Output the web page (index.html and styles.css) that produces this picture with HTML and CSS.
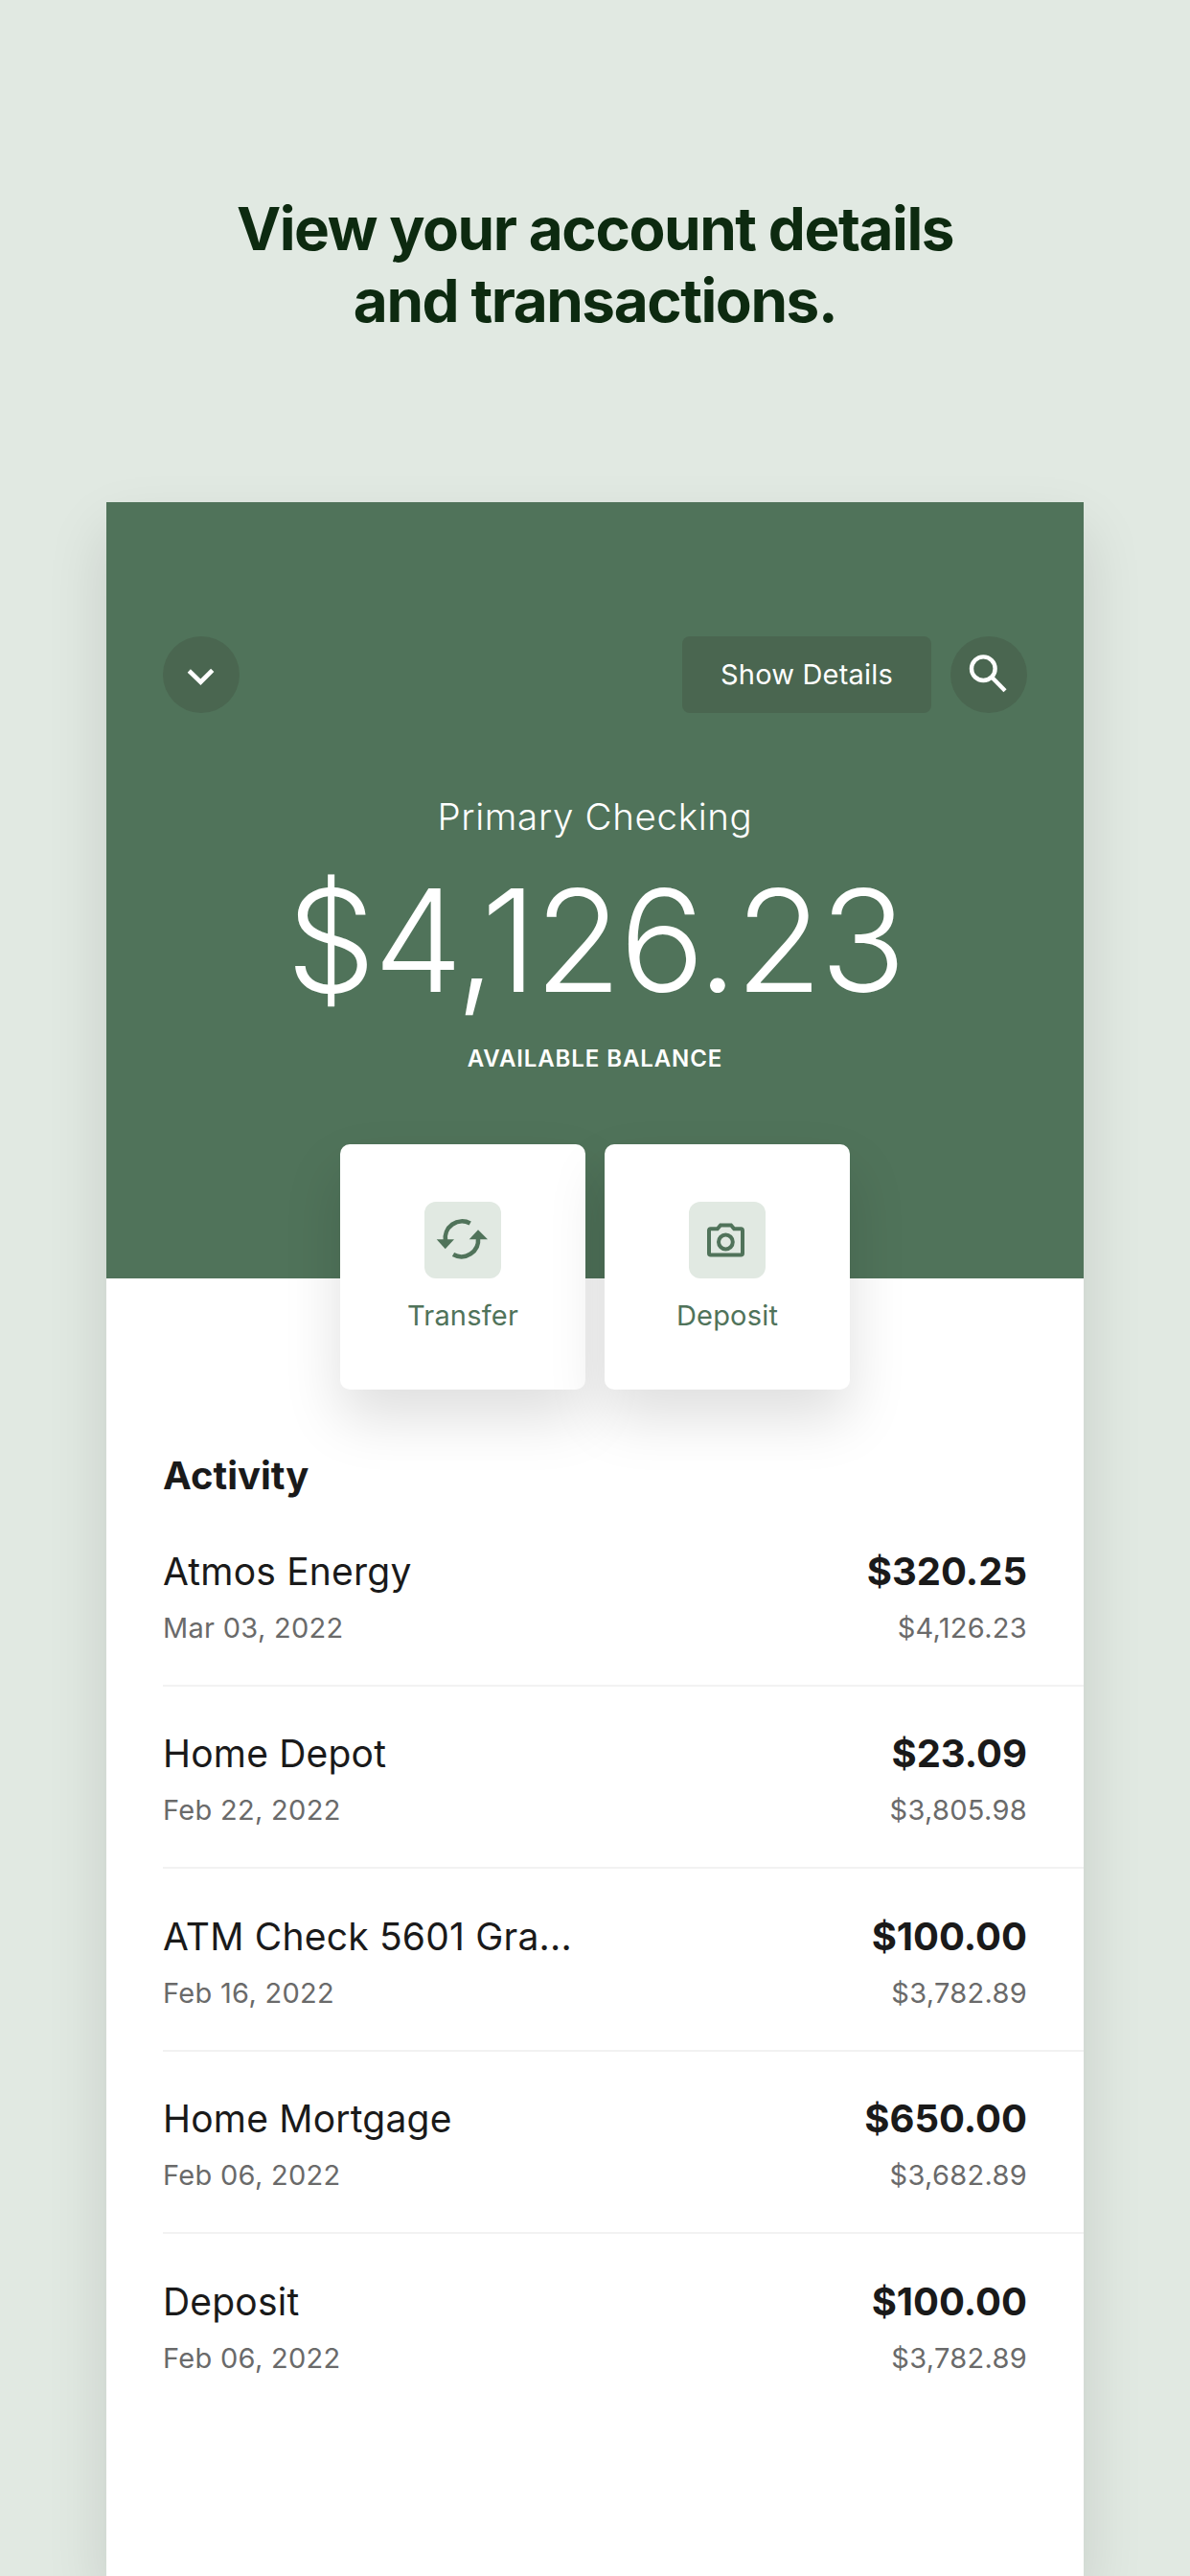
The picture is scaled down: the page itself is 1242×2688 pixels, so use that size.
FILE: index.html
```html
<!DOCTYPE html>
<html lang="en">
<head>
<meta charset="utf-8">
<title>Account details</title>
<link rel="stylesheet" href="styles.css">
</head>
<body>
<main class="page">
  <h1 class="headline">View your account details<br>and transactions.</h1>
  <section class="phone">
    <header class="hero">
      <div class="topbar">
        <button class="round-btn" aria-label="Accounts">
          <svg class="round-icon" viewBox="0 0 80 80"><path class="white-stroke chevron" d="M27.3 36 39.4 47.7 51.7 35.3"/></svg>
        </button>
        <div class="topbar-right">
          <button class="details-btn">Show Details</button>
          <button class="round-btn" aria-label="Search">
            <svg class="round-icon" viewBox="0 0 80 80"><circle class="white-stroke" cx="34.3" cy="33.7" r="12.3"/><path class="white-stroke" d="M43.5 43 57 56.7"/></svg>
          </button>
        </div>
      </div>
      <p class="account-name">Primary Checking</p>
      <p class="balance">$4,126.23</p>
      <p class="balance-label">AVAILABLE BALANCE</p>
      <div class="actions">
        <div class="action">
          <span class="tile">
            <svg class="tile-icon" viewBox="0 0 80 80">
              <path class="green-stroke" d="M47.7 22.6A17.5 17.5 0 0 0 22 41"/>
              <path class="green-fill" d="M12.7 39.3H31L21.7 49.3Z"/>
              <path class="green-stroke" d="M56 38A17.5 17.5 0 0 1 30 55"/>
              <path class="green-fill" d="M46.7 39.3H66L56 29.3Z"/>
            </svg>
          </span>
          <span class="action-label">Transfer</span>
        </div>
        <div class="action">
          <span class="tile">
            <svg class="tile-icon" viewBox="0 0 80 80">
              <path class="green-stroke thin" d="M21 30a1.8 1.8 0 0 1 1.8-1.8h7l3.2-3.7h11l3.2 3.7h7a1.8 1.8 0 0 1 1.8 1.8v23.8a1.8 1.8 0 0 1-1.8 1.8H22.8a1.8 1.8 0 0 1-1.8-1.8Z"/>
              <circle class="green-stroke thin" cx="38.4" cy="42" r="7.4"/>
            </svg>
          </span>
          <span class="action-label">Deposit</span>
        </div>
      </div>
    </header>
    <section class="activity">
      <h2 class="activity-title">Activity</h2>
      <ul class="rows">
        <li class="row"><span class="name">Atmos Energy</span><span class="amount">$320.25</span><span class="sub">Mar 03, 2022</span><span class="sub">$4,126.23</span></li>
        <li class="row"><span class="name">Home Depot</span><span class="amount">$23.09</span><span class="sub">Feb 22, 2022</span><span class="sub">$3,805.98</span></li>
        <li class="row"><span class="name">ATM Check 5601 Gra...</span><span class="amount">$100.00</span><span class="sub">Feb 16, 2022</span><span class="sub">$3,782.89</span></li>
        <li class="row"><span class="name">Home Mortgage</span><span class="amount">$650.00</span><span class="sub">Feb 06, 2022</span><span class="sub">$3,682.89</span></li>
        <li class="row"><span class="name">Deposit</span><span class="amount">$100.00</span><span class="sub">Feb 06, 2022</span><span class="sub">$3,782.89</span></li>
      </ul>
    </section>
  </section>
</main>
</body>
</html>
```
FILE: styles.css
```css
* { box-sizing: border-box; }
html, body { margin: 0; padding: 0; height: 2688px; overflow: hidden; }
body { background: #e1e9e2; font-family: Inter, "Liberation Sans", sans-serif; color: #1a1a1a; }
.page { height: 2688px; overflow: hidden; display: flex; flex-direction: column; align-items: center; padding-top: 201px; }
.headline { margin: 0; width: 100%; text-align: center; font-size: 62px; line-height: 75px; font-weight: 700; letter-spacing: -1.44px; color: #0d2a10; }
.phone { margin-top: 173px; width: 1020px; flex: 1; background: #fff; box-shadow: 0 30px 60px rgba(0, 0, 0, .12); }
.hero { background: #50735a; height: 810px; padding: 140px 59px 0; display: flex; flex-direction: column; align-items: center; color: #fff; }
.topbar { width: 100%; display: flex; justify-content: space-between; }
.topbar-right { display: flex; gap: 20px; }
.round-btn { width: 80px; height: 80px; border: 0; padding: 0; border-radius: 50%; background: #4a6650; display: block; }
.round-icon { width: 80px; height: 80px; display: block; }
.white-stroke { fill: none; stroke: #fff; stroke-width: 4.4; }
.chevron { stroke-width: 4.6; }
.details-btn { width: 260px; height: 80px; border: 0; border-radius: 8px; background: #4a6650; color: #fff; font: 400 29px/78px Inter, "Liberation Sans", sans-serif; letter-spacing: .2px; }
.account-name { margin: 84px 0 0; font-size: 38.5px; line-height: 48px; font-weight: 300; letter-spacing: .65px; }
.balance { margin: 21px 0 0; font-size: 148px; line-height: 170px; font-weight: 270; letter-spacing: -2.4px; }
.balance-label { margin: 23px 0 0; font-size: 24px; line-height: 30px; font-weight: 600; letter-spacing: .9px; }
.actions { margin-top: 74px; display: flex; gap: 20px; position: relative; z-index: 1; }
.action { width: 256px; height: 256px; border-radius: 10px; background: #fff; box-shadow: 0 30px 60px rgba(0, 0, 0, .13); display: flex; flex-direction: column; align-items: center; padding-top: 60px; }
.tile { width: 80px; height: 80px; border-radius: 12px; background: #e1e9e2; display: block; }
.tile-icon { width: 80px; height: 80px; display: block; }
.green-stroke { fill: none; stroke: #50735a; stroke-width: 4.6; }
.green-stroke.thin { stroke-width: 4; }
.green-fill { fill: #50735a; }
.action-label { margin-top: 21px; font-size: 29px; line-height: 36px; color: #50735a; letter-spacing: .2px; }
.activity { padding: 182px 0 0 59px; }
.activity-title { margin: 0; font-size: 40px; line-height: 48px; font-weight: 700; color: #1a1a1a; }
.rows { list-style: none; margin: 5px 0 0; padding: 0; }
.row { height: 190.6px; padding: 45px 59px 0 0; display: grid; grid-template-columns: 1fr auto; grid-template-rows: 50px 44px; row-gap: 12px; align-items: center; border-bottom: 2px solid #f2f2f2; }
.row:last-child { border-bottom: 0; }
.name { font-size: 39px; font-weight: 400; color: #1a1a1a; letter-spacing: .2px; }
.amount { font-size: 40px; font-weight: 700; text-align: right; color: #1a1a1a; }
.sub { font-size: 29px; color: #6a6a6a; letter-spacing: .3px; }
.sub:last-child { text-align: right; }
```
